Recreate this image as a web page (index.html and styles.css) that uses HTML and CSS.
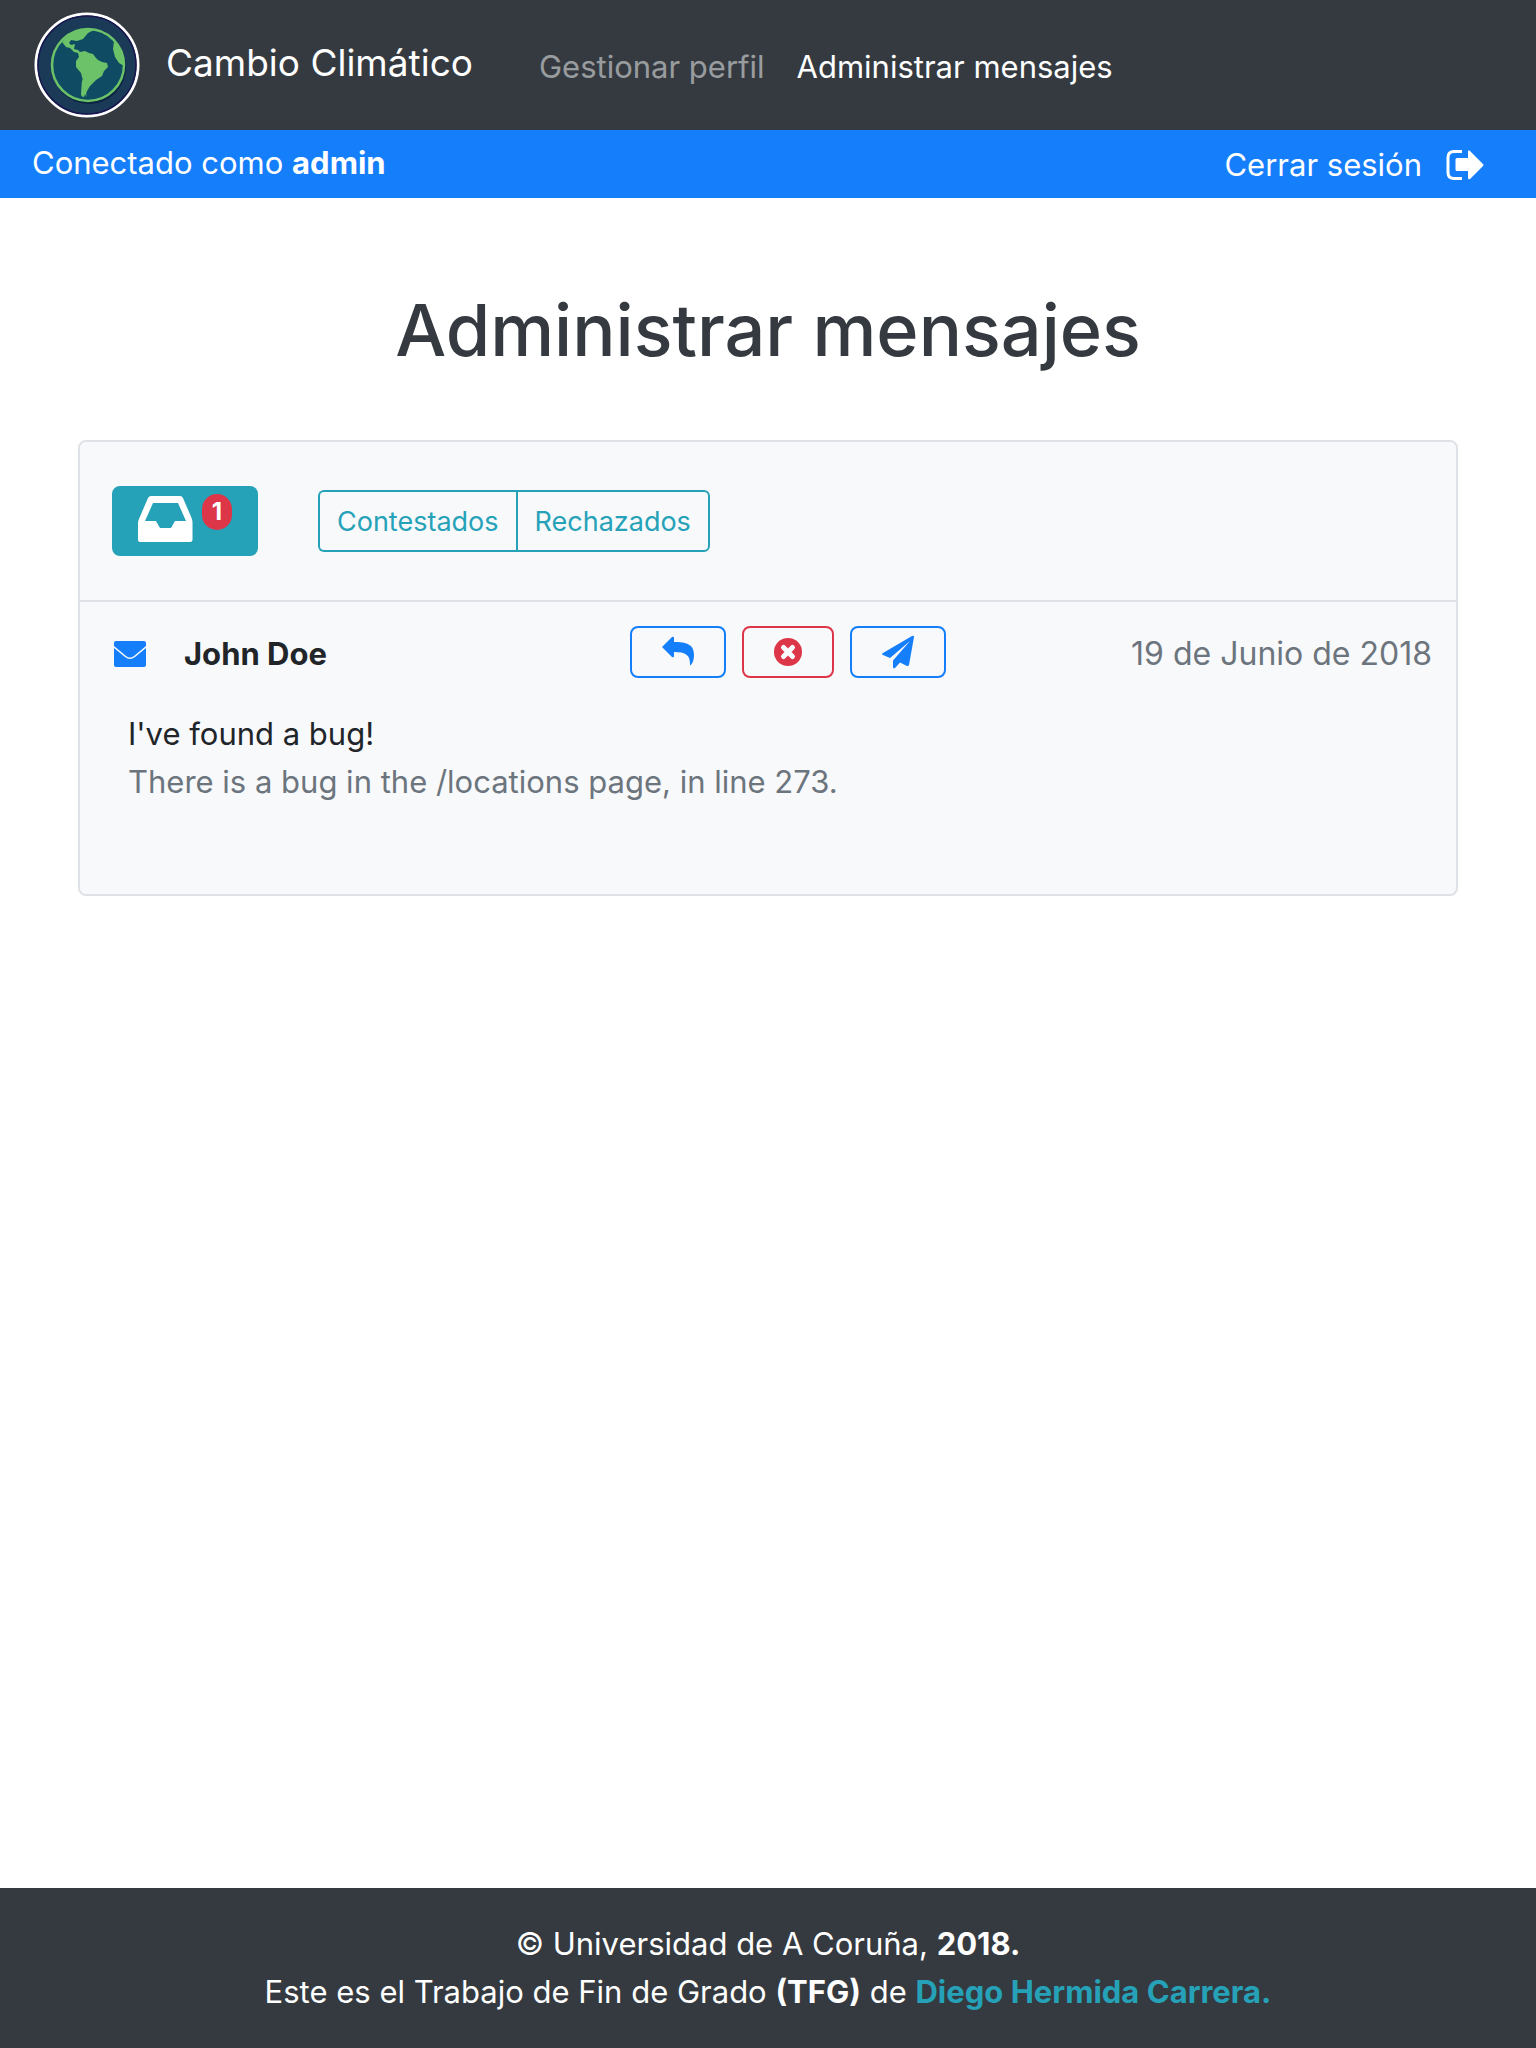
FILE: index.html
```html
<!DOCTYPE html>
<html lang="es">
<head>
<meta charset="utf-8">
<meta name="viewport" content="width=device-width, initial-scale=1">
<title>Administrar mensajes</title>
<link rel="stylesheet" href="styles.css">
</head>
<body>
<header>
  <nav class="navbar">
    <a class="brand" href="#">
      <svg class="logo" viewBox="0 0 106 106" aria-hidden="true">
        <circle cx="53" cy="53" r="51" fill="#1b3a58" stroke="#fff" stroke-width="3"/>
        <circle cx="53" cy="53" r="49" fill="none" stroke="#18164f" stroke-width="1.500"/>
        <circle cx="55" cy="55" r="37" fill="#0b2440"/>
        <circle cx="54" cy="53" r="36" fill="#0f4c64" stroke="#6cc268" stroke-width="2.500"/>
        <path fill="#6cc268" d="M28 30Q36 19 49 17L60 18L54 21L49 27L43 29L37 28L35 31L37 33L41 32L40 37L44 38L46 40L51 39L55 41L59 42L62 46L64 48L68 50L73 51L74 55L70 59L68 64L62 68L56 74L53 79L52 82L53 85L50 81L48 78L49 69L47 61L42 55L42 49L45 45L44 41L40 40L36 36L32 35ZM80 29L79 37L81 45L85 51L90 54Q91 40 80 29Z"/>
        <path fill="#6cc268" d="M48 68L55 72L50 85Q47 85 47 82Z"/>
      </svg>
      <span>Cambio Climático</span>
    </a>
    <a class="nav-link" href="#">Gestionar perfil</a>
    <a class="nav-link active" href="#">Administrar mensajes</a>
  </nav>
  <div class="session">
    <span>Conectado como <b>admin</b></span>
    <a class="logout" href="#">Cerrar sesión
      <svg class="logout-icon" viewBox="0 0 38 32" aria-hidden="true"><path fill="none" stroke="#fff" stroke-width="3" d="M16 2.500H8Q2 2.500 2 8.500V23.500Q2 29.500 8 29.500H16"/><path fill="#fff" d="M11 9H22V3Q22 0 24 2L37 15Q38 16 37 17L24 30Q22 31 22 29V22H11Q9.500 22 9.500 20.500V10.500Q9.500 9 11 9Z"/></svg>
    </a>
  </div>
</header>
<main>
  <h1>Administrar mensajes</h1>
  <section class="card">
    <div class="toolbar">
      <button class="inbox" type="button" aria-label="Recibidos">
        <svg class="inbox-icon" viewBox="0 0 54 46" aria-hidden="true"><path fill="#fff" fill-rule="evenodd" d="M13 0H42Q44 0 45 2L54 23Q54.500 25 54.500 27V44Q54.500 46 52 46H2Q0 46 0 44V27Q0 25 1 23L10 2Q11 0 13 0ZM15 7L7 25H18L22 32H33L37 25H48L40 7Z"/></svg>
        <span class="badge">1</span>
      </button>
      <div class="group">
        <button type="button">Contestados</button>
        <button type="button">Rechazados</button>
      </div>
    </div>
    <article class="message">
      <div class="message-head">
        <div class="sender">
          <svg class="mail-icon" viewBox="0 0 32 26" aria-hidden="true"><path fill="#157efb" d="M2 0H30Q32 0 32 2V5L20 15Q16 18 12 15L0 5V2Q0 0 2 0ZM0 7L11 16Q16 20 21 16L32 7V24Q32 26 30 26H2Q0 26 0 24Z"/></svg>
          <b>John Doe</b>
        </div>
        <div class="actions">
          <button type="button" aria-label="Responder"><svg viewBox="0 0 32 32" aria-hidden="true"><path fill="currentColor" d="M0 11L10 1Q12 0 12 2V6C24 6 32 8 32 19Q32 25 29 29Q28 30 28 28C28 19 24 16 12 16V20Q12 22 10 21Z"/></svg></button>
          <button class="danger" type="button" aria-label="Rechazar"><svg viewBox="0 0 28 32" aria-hidden="true"><circle cx="14" cy="16" r="14" fill="currentColor"/><path stroke="#f8f9fa" stroke-width="5" stroke-linecap="round" d="M9.500 11.500L18.500 20.500M18.500 11.500L9.500 20.500"/></svg></button>
          <button type="button" aria-label="Enviar"><svg viewBox="0 0 32 32" aria-hidden="true"><path fill="currentColor" d="M1 17L30 0Q32 -1 32 1L27 29Q27 30 25 30L18 26.500L13 32Q11 33 11 31V24.500L28 5L8 22L1 19Q-1 18 1 17Z"/></svg></button>
        </div>
        <time datetime="2018-06-19">19 de Junio de 2018</time>
      </div>
      <div class="message-body">
        <p>I've found a bug!</p>
        <p class="muted">There is a bug in the /locations page, in line 273.</p>
      </div>
    </article>
  </section>
</main>
<footer>
  <p>© Universidad de A Coruña, <b>2018.</b></p>
  <p>Este es el Trabajo de Fin de Grado <b>(TFG)</b> de <a href="#">Diego Hermida Carrera.</a></p>
</footer>
</body>
</html>
```
FILE: styles.css
```css
* { box-sizing: border-box; }
body {
  margin: 0;
  min-height: 100vh;
  display: flex;
  flex-direction: column;
  background: #fff;
  color: #212529;
  font-family: Inter, "Liberation Sans", sans-serif;
  font-size: 31px;
  line-height: 48px;
}
a { color: inherit; text-decoration: none; }
p { margin: 0; }
svg { display: block; flex: none; overflow: visible; }
button { font: inherit; margin: 0; cursor: pointer; }

.navbar {
  display: flex;
  align-items: center;
  gap: 32px;
  min-height: 130px;
  padding: 12px 34px;
  background: #343a40;
  color: #fff;
}
.brand {
  display: flex;
  align-items: center;
  gap: 26px;
  margin-right: 34px;
  font-size: 37px;
}
.brand span { padding-bottom: 4px; }
.logo { width: 106px; height: 106px; }
.nav-link { padding-top: 4px; color: rgba(255, 255, 255, .5); }
.nav-link.active { color: #fff; }

.session {
  display: flex;
  align-items: center;
  justify-content: space-between;
  min-height: 68px;
  padding: 0 52px 2px 32px;
  background: #157efb;
  color: #fff;
}
.logout { display: flex; align-items: center; gap: 24px; padding-top: 4px; }
.logout-icon { width: 38px; height: 32px; }

main { flex: 1; padding: 84px 78px 0; }
h1 {
  margin: 0 0 62px;
  color: #343a40;
  font-size: 72px;
  font-weight: 500;
  line-height: 96px;
  text-align: center;
}

.card {
  border: 2px solid #dee2e6;
  border-radius: 8px;
  background: #f8f9fb;
}
.toolbar {
  display: flex;
  align-items: center;
  gap: 60px;
  min-height: 160px;
  padding: 0 32px;
  border-bottom: 2px solid #dee2e6;
}
.inbox {
  display: flex;
  align-items: flex-start;
  gap: 10px;
  height: 70px;
  padding: 8px 26px;
  border: 0;
  border-radius: 8px;
  background: #26a2b8;
}
.inbox-icon { width: 54px; height: 46px; margin-top: 2px; }
.badge {
  width: 30px;
  border-radius: 18px;
  background: #dc3648;
  color: #fff;
  font-size: 24px;
  font-weight: 700;
  line-height: 36px;
  text-align: center;
}
.group { display: flex; }
.group button {
  height: 62px;
  padding: 2px 17px 0;
  border: 2px solid #26a2b8;
  border-radius: 0 6px 6px 0;
  background: transparent;
  color: #26a2b8;
  font-size: 27px;
}
.group button:first-child { border-right: 0; border-radius: 6px 0 0 6px; }

.message { padding: 24px 24px 88px 32px; }
.message-head {
  display: grid;
  grid-template-columns: 1fr auto 1fr;
  align-items: center;
}
.sender { display: flex; align-items: center; gap: 38px; padding: 4px 0 0 2px; }
.mail-icon { width: 32px; height: 26px; }
.actions { display: flex; gap: 16px; margin-left: 32px; }
.actions button {
  display: flex;
  align-items: center;
  height: 52px;
  padding: 0 30px;
  border: 2px solid #157efb;
  border-radius: 8px;
  background: transparent;
  color: #157efb;
}
.actions .danger { border-color: #dc3648; color: #dc3648; }
.actions svg { width: 32px; height: 32px; }
.actions .danger svg { width: 28px; }
time { padding-top: 4px; color: #6c757d; font-size: 32px; text-align: right; }
.message-body { padding: 32px 16px 0; }
.muted { color: #6c757d; }

footer {
  padding: 32px;
  background: #343a40;
  color: #fff;
  text-align: center;
}
footer a { color: #26a2b8; font-weight: 700; }
```
